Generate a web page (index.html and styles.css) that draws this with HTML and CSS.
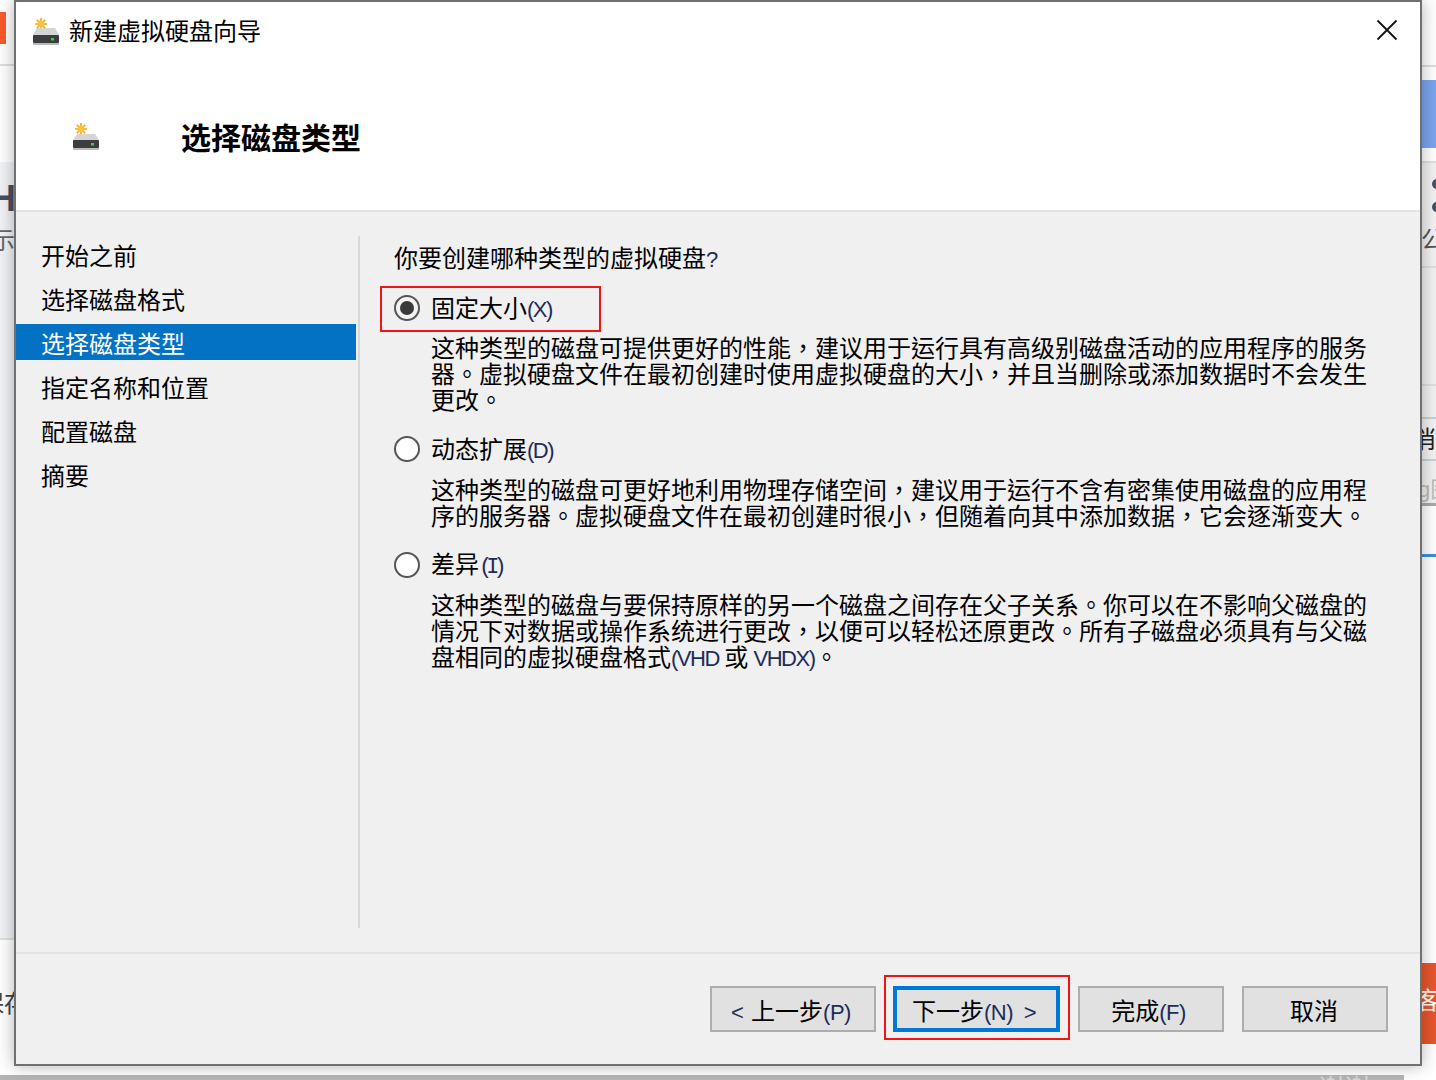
FILE: index.html
```html
<!DOCTYPE html>
<html lang="zh-CN">
<head>
<meta charset="utf-8">
<title>新建虚拟硬盘向导</title>
<link rel="stylesheet" href="styles.css">
</head>
<body>
<div class="desk">
  <div class="bg-orange-tl"></div>
  <div class="bg-line bg-line-l1"></div>
  <div class="bg-tint-l"></div>
  <div class="bg-tint-r"></div>
  <div class="bg-glyph bg-h">H</div>
  <div class="bg-glyph bg-shi">示</div>
  <div class="bg-line bg-line-l2"></div>
  <div class="bg-glyph bg-bao">保存</div>
  <div class="bg-bottom"></div>
  <div class="bg-thanks">谢谢</div>
  <div class="bg-line bg-line-r1"></div>
  <div class="bg-blue-r"></div>
  <div class="bg-line bg-line-r2"></div>
  <div class="bg-dot bg-dot1"></div>
  <div class="bg-dot bg-dot2"></div>
  <div class="bg-glyph bg-gong">公</div>
  <div class="bg-line bg-line-r3"></div>
  <div class="bg-line bg-line-r4"></div>
  <div class="bg-btn-r"><span class="bg-xiao">消</span></div>
  <div class="bg-g">g图</div>
  <div class="bg-rule-r"></div>
  <div class="bg-blueline"></div>
  <div class="bg-orange-br"><span>客</span></div>
</div>

<section class="dialog">
  <header class="head">
    <div class="titlebar">
      <svg class="icon-title" viewBox="0 0 28 28" width="28" height="28" aria-hidden="true">
        <g stroke="#f5a300" stroke-width="1.6"><path d="M9 1v12M3 7h12M4.800 2.800l8.400 8.400M13.200 2.800l-8.400 8.400"/></g>
        <circle cx="9" cy="7" r="3.600" fill="#fcc33a"/>
        <path d="M5 11h18l4 7H1z" fill="#d4d6d6"/>
        <rect x="1" y="18" width="26" height="8" rx="1" fill="#3b3d3f"/>
        <rect x="1" y="26" width="26" height="2" fill="#b9bbbb"/>
        <rect x="19" y="21" width="3" height="2.500" fill="#35d04a"/>
      </svg>
      <span class="title-text">新建虚拟硬盘向导</span>
      <svg class="icon-close" viewBox="0 0 22 22" width="22" height="22" aria-hidden="true">
        <path d="M1.500 1.500l19 19M20.500 1.500l-19 19" stroke="#111" stroke-width="1.800" fill="none"/>
      </svg>
    </div>
    <div class="banner">
      <svg class="icon-banner" viewBox="0 0 28 28" width="28" height="28" aria-hidden="true">
        <g stroke="#f5a300" stroke-width="1.6"><path d="M9 1v12M3 7h12M4.800 2.800l8.400 8.400M13.200 2.800l-8.400 8.400"/></g>
        <circle cx="9" cy="7" r="3.400" fill="#fcc33a"/>
        <path d="M5 12h18l4 6H1z" fill="#d4d6d6"/>
        <rect x="1" y="18" width="26" height="8" rx="1" fill="#3b3d3f"/>
        <rect x="1" y="26" width="26" height="2" fill="#b9bbbb"/>
        <rect x="19" y="21" width="3" height="2.500" fill="#35d04a"/>
      </svg>
      <h1 class="banner-title">选择磁盘类型</h1>
    </div>
  </header>

  <div class="main">
    <nav class="steps">
      <div class="step">开始之前</div>
      <div class="step">选择磁盘格式</div>
      <div class="step step-active">选择磁盘类型</div>
      <div class="step">指定名称和位置</div>
      <div class="step">配置磁盘</div>
      <div class="step">摘要</div>
    </nav>
    <div class="content">
      <p class="question">你要创建哪种类型的虚拟硬盘<span class="lat">?</span></p>

      <div class="option option-fixed">
        <div class="option-row marked">
          <span class="radio radio-on"></span>
          <span class="option-label">固定大小<span class="lat">(X)</span></span>
        </div>
        <p class="desc" lang="zh-TW">这种类型的磁盘可提供更好的性能，建议用于运行具有高级别磁盘活动的应用程序的服务器。虚拟硬盘文件在最初创建时使用虚拟硬盘的大小，并且当删除或添加数据时不会发生更改。</p>
      </div>

      <div class="option option-dynamic">
        <div class="option-row">
          <span class="radio"></span>
          <span class="option-label">动态扩展<span class="lat">(D)</span></span>
        </div>
        <p class="desc" lang="zh-TW">这种类型的磁盘可更好地利用物理存储空间，建议用于运行不含有密集使用磁盘的应用程序的服务器。虚拟硬盘文件在最初创建时很小，但随着向其中添加数据，它会逐渐变大。</p>
      </div>

      <div class="option option-diff">
        <div class="option-row">
          <span class="radio"></span>
          <span class="option-label">差异<span class="lat lat-i">(I)</span></span>
        </div>
        <p class="desc" lang="zh-TW">这种类型的磁盘与要保持原样的另一个磁盘之间存在父子关系。你可以在不影响父磁盘的情况下对数据或操作系统进行更改，以便可以轻松还原更改。所有子磁盘必须具有与父磁盘相同的虚拟硬盘格式<span class="lat">(VHD</span> 或 <span class="lat">VHDX)</span>。</p>
      </div>
    </div>
  </div>

  <footer class="foot">
    <button class="btn btn-prev" type="button"><span class="lat lat-prev">&lt; </span>上一步<span class="lat">(P)</span></button>
    <span class="next-mark"><button class="btn btn-next" type="button">下一步<span class="lat lat-next">(N) &gt;</span></button></span>
    <button class="btn btn-finish" type="button">完成<span class="lat">(F)</span></button>
    <button class="btn btn-cancel" type="button">取消</button>
  </footer>
</section>
</body>
</html>
```
FILE: styles.css
```css
* { box-sizing: border-box; }
html, body { margin: 0; height: 1080px; overflow: hidden; background: #fff; }
body { font-family: "Noto Sans CJK SC", "Noto Sans", sans-serif; color: #000; font-size: 24px; }

.desk { position: absolute; inset: 0; overflow: hidden; }
.desk > div { position: absolute; }
.bg-orange-tl { left: 0; top: 12px; width: 6px; height: 32px; background: #fb5a2c; }
.bg-line { height: 2px; background: #dfdfdf; }
.bg-line-l1 { left: 0; top: 64px; width: 14px; }
.bg-tint-l { left: 0; top: 162px; width: 14px; height: 776px; background: #f1f2f5; }
.bg-tint-r { left: 1422px; top: 162px; width: 14px; height: 342px; background: #f2f2f2; }
.bg-line-l2 { left: 0; top: 938px; width: 14px; }
.bg-glyph { color: #555a68; line-height: 1; }
.bg-h { left: -10px; top: 178px; font: 700 36px "Liberation Sans", sans-serif; color: #4a4f60; }
.bg-shi { left: -9px; top: 227px; font-size: 24px; color: #666; }
.bg-bao { left: -20px; top: 990px; font-size: 24px; color: #444; }
.bg-bottom { left: 0; top: 1075px; width: 1404px; height: 5px; background: #b5b5b5; }
.bg-thanks { left: 1318px; top: 1072px; font-size: 26px; line-height: 30px; color: #d8d8d8; }
.bg-line-r1 { left: 1422px; top: 65px; width: 14px; }
.bg-blue-r { left: 1422px; top: 80px; width: 14px; height: 68px; background: #7ba4ef; }
.bg-line-r2 { left: 1422px; top: 161px; width: 14px; }
.bg-dot { left: 1432px; width: 10px; height: 10px; border-radius: 50%; background: #4a4f5c; }
.bg-dot1 { top: 179px; }
.bg-dot2 { top: 202px; }
.bg-gong { left: 1421px; top: 226px; font-size: 24px; color: #555; }
.bg-line-r3 { left: 1422px; top: 266px; width: 14px; }
.bg-line-r4 { left: 1422px; top: 384px; width: 14px; }
.bg-btn-r { left: 1422px; top: 417px; width: 14px; height: 44px; border-top: 2px solid #cfcfcf; border-bottom: 2px solid #cfcfcf; background: #f3f3f3; overflow: hidden; }
.bg-xiao { position: absolute; left: -10px; top: 4px; font-size: 24px; line-height: 30px; color: #222; }
.bg-g { left: 1418px; top: 478px; font: 22px/24px "Liberation Sans", "Noto Sans CJK SC", sans-serif; color: #bbb; white-space: nowrap; width: 18px; overflow: hidden; }
.bg-rule-r { left: 1422px; top: 503px; width: 14px; height: 3px; background: #aaa; }
.bg-blueline { left: 1422px; top: 554px; width: 14px; height: 3px; background: #3d8ee0; }
.bg-orange-br { left: 1422px; top: 963px; width: 14px; height: 81px; background: #e8552d; overflow: hidden; }
.bg-orange-br span { position: absolute; left: -6px; top: 21px; font-size: 24px; line-height: 30px; color: #fff; }

.dialog {
  position: absolute; left: 14px; top: 0; width: 1408px; height: 1066px;
  border: 2px solid #707070; background: #f0f0f0;
  box-shadow: 0 0 16px rgba(0,0,0,.3);
  display: flex; flex-direction: column;
}
.head { height: 210px; background: #fff; border-bottom: 2px solid #e3e3e3; flex: none; }
.titlebar { height: 62px; display: flex; align-items: center; padding: 0 22px 0 16px; }
.icon-title { flex: none; margin-top: -4px; }
.title-text { margin-left: 9px; margin-bottom: 6px; font-size: 24px; line-height: 30px; }
.icon-close { margin-left: auto; margin-top: -6px; }
.banner { display: flex; align-items: center; padding: 0 0 0 56px; height: 146px; }
.icon-banner { flex: none; margin-top: -2px; }
.banner-title { margin: 0 0 2px 81px; font-size: 30px; font-weight: 700; line-height: 40px; color: #000; }

.main { flex: 1; min-height: 0; display: flex; padding-top: 24px; }
.steps { width: 344px; height: 692px; flex: none; border-right: 2px solid #d8d8d8; padding-right: 2px; }
.step { height: 36px; margin-bottom: 8px; padding: 0 0 0 25px; line-height: 38px; white-space: nowrap; }
.step-active { background: #0472c4; color: #fff; }

.content { flex: 1; padding: 5px 0 0 34px; }
.question { margin: 0; line-height: 32px; }
.lat { font-family: "Liberation Sans", sans-serif; font-size: 22px; letter-spacing: -1.5px; color: #1d2c5a; }
.btn .lat { letter-spacing: -.5px; }
.btn .lat-prev { word-spacing: 2px; }
.btn .lat-next { word-spacing: 5px; }
.lat-i { font-family: "Liberation Mono", monospace; letter-spacing: -6px; padding-right: 6px; }
.option-row { display: flex; align-items: center; gap: 11px; height: 46px; width: 222px; position: relative; }
.marked::before { content: ""; position: absolute; left: -14px; top: 1px; width: 217px; height: 42px; border: 2px solid #f01414; }
.option-fixed { margin-top: 9px; }
.option-dynamic { margin-top: 14px; }
.option-diff { margin-top: 14px; }
.radio { width: 26px; height: 26px; flex: none; border-radius: 50%; border: 2px solid #555; background: #fff; position: relative; }
.radio-on { background: #f3f3f3; }
.radio-on::after { content: ""; position: absolute; inset: 4px; border-radius: 50%; background: #3a3a3a; }
.option-label { line-height: 30px; }
.desc { margin: 3px 0 0 37px; width: 940px; line-height: 26px; }
.option-dynamic .desc { margin-top: 4px; }

.foot { flex: none; height: 112px; border-top: 2px solid #e3e3e3; display: flex; align-items: flex-start; padding: 32px 0 0 694px; position: relative; }
.btn { height: 46px; margin: 0; padding: 2px 0 0; border: 2px solid #adadad; background: #e1e1e1; font: inherit; font-size: 24px; line-height: 40px; color: #000; white-space: nowrap; }
.btn-prev { width: 166px; padding-right: 4px; }
.next-mark { display: block; position: relative; margin-left: 17px; }
.next-mark::before { content: ""; position: absolute; left: -9px; top: -11px; width: 182px; height: 61px; border: 2px solid #f01414; }
.btn-next { width: 167px; border: 4px solid #0078d7; display: block; position: relative; line-height: 36px; padding-right: 5px; }
.btn-finish { width: 146px; margin-left: 18px; padding-right: 5px; }
.btn-cancel { width: 146px; margin-left: 18px; padding-right: 2px; }
```
